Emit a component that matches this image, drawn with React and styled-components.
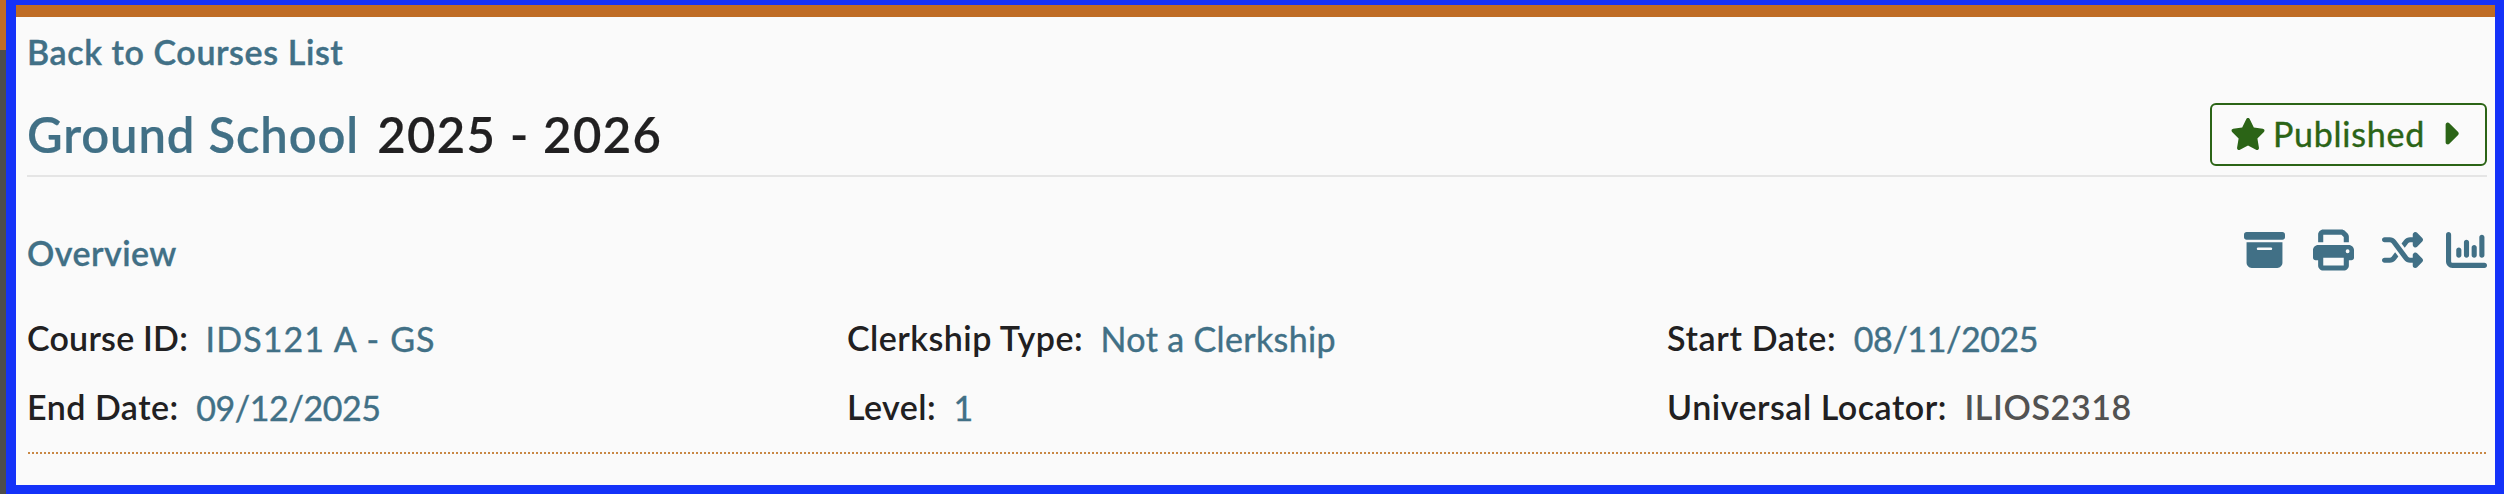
import React from 'react';
import styled, { createGlobalStyle } from 'styled-components';
import { FaBoxArchive, FaPrint, FaShuffle, FaChartColumn, FaStar, FaCaretRight } from 'react-icons/fa6';

const GlobalStyle = createGlobalStyle`
  * { box-sizing: border-box; }
  html, body { margin: 0; padding: 0; }
  body {
    font-family: Lato, "Open Sans", sans-serif;
    font-size: 34px;
    line-height: 40px;
    color: #212021;
    background: #fafafa;
  }
`;

const Window = styled.div`
  display: flex;
  height: 494px;
  overflow: hidden;
`;

const Rail = styled.aside`
  width: 6px;
  background: #4d4d4d;
  border-top: 50px solid #bf6c25;
`;

const Highlight = styled.main`
  flex: 1;
  border: solid #1432f9;
  border-width: 5px 9px 9px 10px;
`;

const Course = styled.article`
  height: 100%;
  padding: 15px 8px 0 11px;
  border-top: 12px solid #bf6c25;
  background: #fafafa;
`;

const BackLink = styled.a`
  display: block;
  color: #417086;
  font-weight: 600;
  letter-spacing: 0.6px;
  -webkit-text-stroke: 0.4px;
`;

const Header = styled.header`
  display: flex;
  align-items: flex-start;
  justify-content: space-between;
  height: 105px;
  padding-top: 31px;
  border-bottom: 2px solid #e5e5e5;
`;

const Title = styled.h1`
  display: flex;
  margin: 0;
  font-size: 49px;
  font-weight: 600;
  line-height: 62px;
  -webkit-text-stroke: 0.2px;
`;

const CourseName = styled.span`
  margin-right: 18px;
  color: #417086;
  letter-spacing: 0.87px;
`;

const Year = styled.span`
  letter-spacing: 1.38px;
`;

const PublishButton = styled.button`
  display: flex;
  align-items: center;
  width: 277px;
  height: 63px;
  padding: 0 0 2px 18px;
  border: 2px solid #2b6416;
  border-radius: 6px;
  background: transparent;
  color: #2b6416;
  font: 400 34px/40px Lato, sans-serif;
  letter-spacing: 0.77px;
  -webkit-text-stroke: 0.4px;
`;

const StarIcon = styled(FaStar)`
  width: 36px;
  height: 34px;
  margin-right: 7px;
`;

const CaretIcon = styled(FaCaretRight)`
  width: 22px;
  height: 35px;
  margin-left: 14px;
`;

const SectionBar = styled.div`
  display: flex;
  justify-content: space-between;
  padding-top: 52px;
`;

const SectionTitle = styled.h2`
  margin: 4px 0 0;
  color: #417086;
  font-size: 34px;
  font-weight: 600;
  line-height: 40px;
  letter-spacing: 0.45px;
  -webkit-text-stroke: 0.3px;
`;

const Actions = styled.nav`
  display: flex;
  gap: 28px;
  color: #417086;

  svg {
    width: 41px;
    height: 42px;
  }

  svg:last-child {
    margin-left: -5px;
  }
`;

const Details = styled.dl`
  display: grid;
  grid-template-columns: repeat(3, 820px);
  grid-auto-rows: 69px;
  height: 137px;
  margin: 45px 0 0;
`;

const Field = styled.div`
  display: flex;
  align-items: flex-start;
  gap: 17.5px;
`;

const Label = styled.dt`
  font-weight: 600;
  letter-spacing: ${(p) => p.$tracking}px;
  white-space: nowrap;
`;

const Value = styled.dd`
  margin: ${(p) => (p.$locked ? 0 : '1px')} 0 0;
  color: ${(p) => (p.$locked ? '#525252' : '#417086')};
  font-weight: ${(p) => (p.$locked ? 600 : 400)};
  letter-spacing: ${(p) => p.$tracking}px;
  white-space: nowrap;
  -webkit-text-stroke: ${(p) => (p.$locked ? 0 : '0.4px')};
`;

const Divider = styled.hr`
  height: 2px;
  margin: -3px 1px 0;
  border: 0;
  background: repeating-linear-gradient(90deg, #c98845 0 2px, transparent 2px 4px);
`;

const fields = [
  { label: 'Course ID:', labelTracking: 0.22, value: 'IDS121 A - GS', tracking: 1.1 },
  { label: 'Clerkship Type:', labelTracking: 0.46, value: 'Not a Clerkship', tracking: 0.35 },
  { label: 'Start Date:', labelTracking: 0.66, value: '08/11/2025', tracking: -0.42 },
  { label: 'End Date:', labelTracking: 0.5, value: '09/12/2025', tracking: -0.4 },
  { label: 'Level:', labelTracking: 0.46, value: '1', tracking: 0 },
  { label: 'Universal Locator:', labelTracking: 0.52, value: 'ILIOS2318', tracking: 0.62, locked: true },
];

export default function App() {
  return (
    <>
      <GlobalStyle />
      <Window>
        <Rail />
        <Highlight>
          <Course>
            <BackLink>Back to Courses List</BackLink>
            <Header>
              <Title>
                <CourseName>Ground School</CourseName>
                <Year>2025 - 2026</Year>
              </Title>
              <PublishButton>
                <StarIcon />
                Published
                <CaretIcon />
              </PublishButton>
            </Header>
            <SectionBar>
              <SectionTitle>Overview</SectionTitle>
              <Actions>
                <FaBoxArchive />
                <FaPrint />
                <FaShuffle />
                <FaChartColumn />
              </Actions>
            </SectionBar>
            <Details>
              {fields.map((f) => (
                <Field key={f.label}>
                  <Label $tracking={f.labelTracking}>{f.label}</Label>
                  <Value $tracking={f.tracking} $locked={f.locked}>{f.value}</Value>
                </Field>
              ))}
            </Details>
            <Divider />
          </Course>
        </Highlight>
      </Window>
    </>
  );
}
